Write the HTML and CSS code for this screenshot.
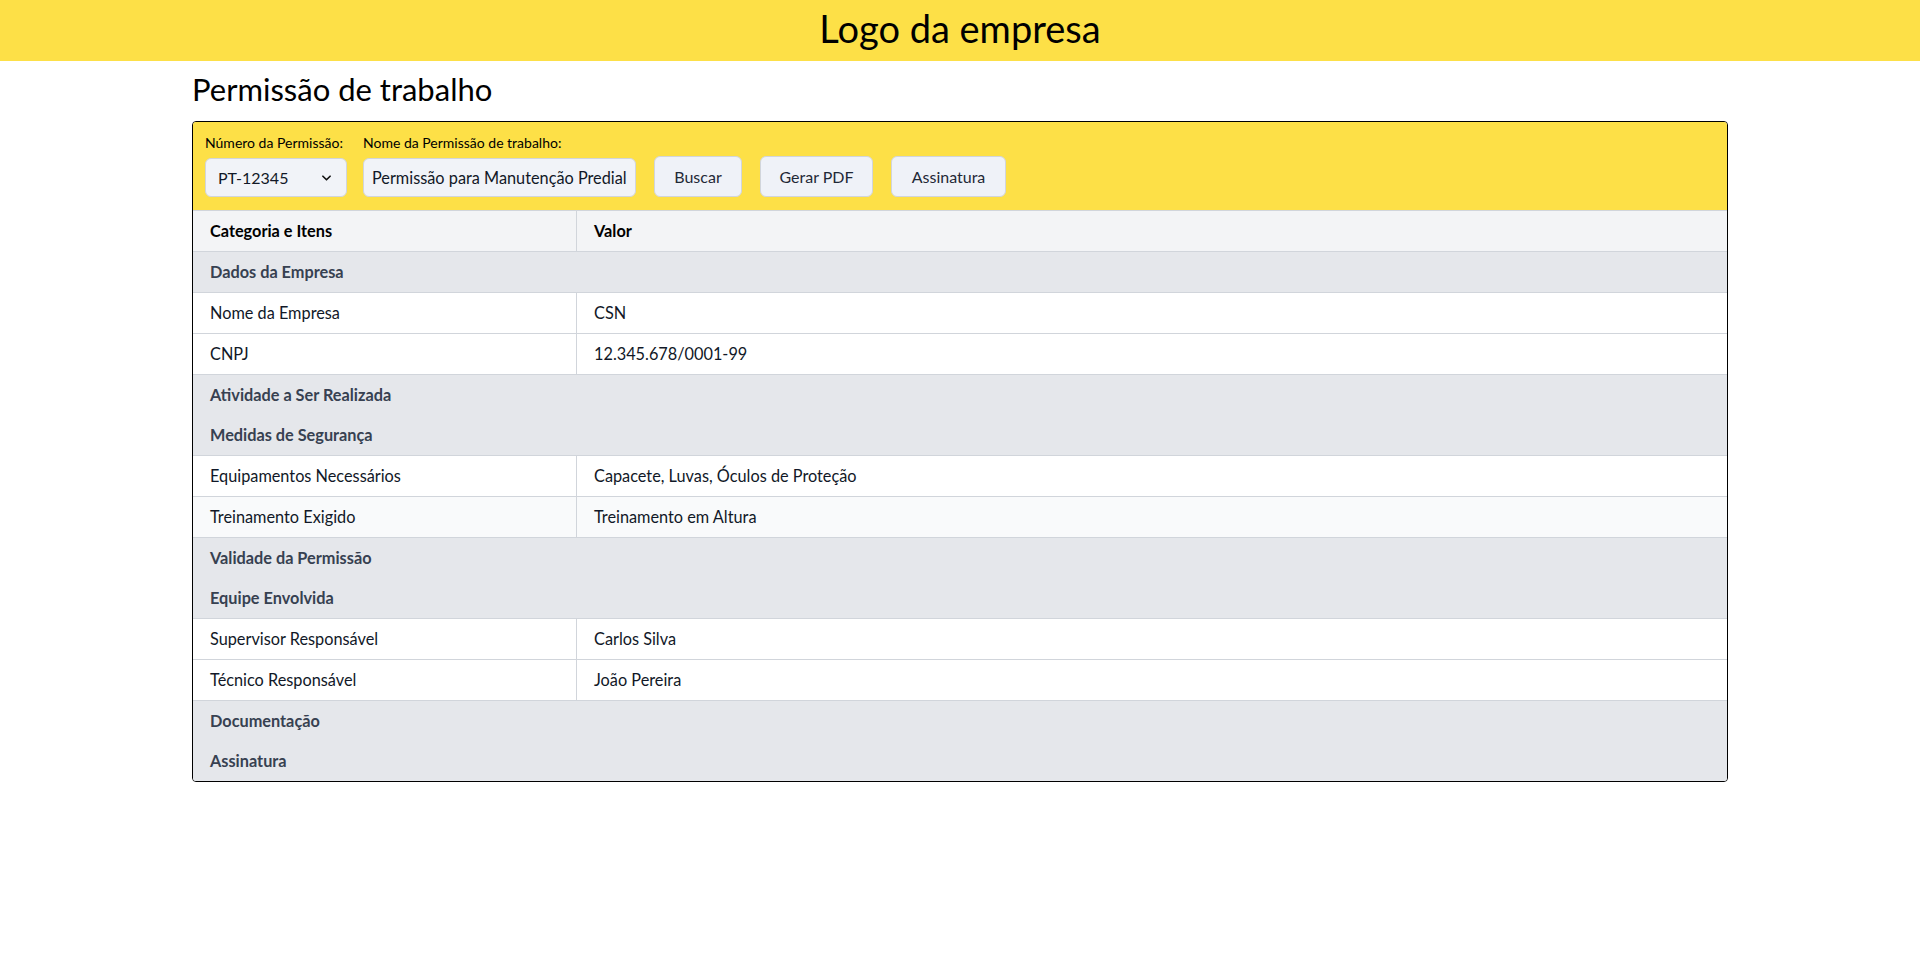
FILE: index.html
```html
<!DOCTYPE html>
<html lang="pt-BR">
<head>
<meta charset="utf-8">
<title>Permissão de trabalho</title>
<link rel="stylesheet" href="styles.css">
</head>
<body>
<header class="topbar">
  <h1 class="logo">Logo da empresa</h1>
</header>
<main class="container">
  <h2 class="page-title">Permissão de trabalho</h2>
  <section class="card">
    <div class="toolbar">
      <div class="field">
        <label class="field-label" for="num">Número da Permissão:</label>
        <div class="select-wrap">
          <select id="num" class="select"><option>PT-12345</option></select>
          <svg class="chev" viewBox="0 0 10 6" width="9" height="6"><path d="M1 1l4 4 4-4" fill="none" stroke="#111" stroke-width="1.8" stroke-linecap="round" stroke-linejoin="round"/></svg>
        </div>
      </div>
      <div class="field">
        <label class="field-label" for="nome">Nome da Permissão de trabalho:</label>
        <input id="nome" class="input" type="text" value="Permissão para Manutenção Predial">
      </div>
      <button class="btn btn-buscar">Buscar</button>
      <button class="btn btn-pdf">Gerar PDF</button>
      <button class="btn btn-ass">Assinatura</button>
    </div>
    <table class="grid">
      <thead>
        <tr><th class="col-cat">Categoria e Itens</th><th>Valor</th></tr>
      </thead>
      <tbody>
        <tr class="cat"><td colspan="2">Dados da Empresa</td></tr>
        <tr class="item"><td>Nome da Empresa</td><td>CSN</td></tr>
        <tr class="item"><td>CNPJ</td><td>12.345.678/0001-99</td></tr>
        <tr class="cat"><td colspan="2">Atividade a Ser Realizada</td></tr>
        <tr class="cat"><td colspan="2">Medidas de Segurança</td></tr>
        <tr class="item"><td>Equipamentos Necessários</td><td>Capacete, Luvas, Óculos de Proteção</td></tr>
        <tr class="item hover"><td>Treinamento Exigido</td><td>Treinamento em Altura</td></tr>
        <tr class="cat"><td colspan="2">Validade da Permissão</td></tr>
        <tr class="cat"><td colspan="2">Equipe Envolvida</td></tr>
        <tr class="item"><td>Supervisor Responsável</td><td>Carlos Silva</td></tr>
        <tr class="item"><td>Técnico Responsável</td><td>João Pereira</td></tr>
        <tr class="cat"><td colspan="2">Documentação</td></tr>
        <tr class="cat"><td colspan="2">Assinatura</td></tr>
      </tbody>
    </table>
  </section>
</main>
</body>
</html>
```
FILE: styles.css
```css
* { box-sizing: border-box; }
html, body { margin: 0; padding: 0; background: #fff; }
body {
  font-family: "Lato", "Noto Sans", sans-serif;
  color: #111827;
}
.topbar {
  background: #fde047;
  height: 61px;
  display: flex;
  align-items: flex-start;
  justify-content: center;
}
.logo {
  margin: 0;
  padding-top: 6px;
  font-weight: 400;
  font-size: 38px;
  line-height: 44px;
  color: #000;
}
.container {
  width: 1536px;
  margin: 0 auto;
}
.page-title {
  margin: 0;
  padding-top: 8px;
  font-weight: 400;
  font-size: 31px;
  line-height: 40px;
  color: #000;
  height: 60px;
}
.card {
  border: 1px solid #000;
  border-radius: 4px;
  overflow: hidden;
}
.toolbar {
  background: #fde047;
  padding: 12px 12px 13px 12px;
  display: flex;
  align-items: flex-end;
  gap: 16px;
}
.field { display: flex; flex-direction: column; }
.field-label {
  font-size: 14px;
  line-height: 18px;
  margin-bottom: 6px;
  color: #000;
}
.select-wrap { position: relative; width: 142px; }
.select {
  appearance: none;
  -webkit-appearance: none;
  width: 142px;
  height: 39px;
  border: 1px solid #d1d5db;
  border-radius: 6px;
  background: #f1f3f8;
  font-family: inherit;
  font-size: 16px;
  color: #111827;
  padding: 0 12px;
}
.chev { position: absolute; right: 16px; top: 17px; pointer-events: none; }
.input {
  width: 273px;
  height: 39px;
  border: 1px solid #d1d5db;
  border-radius: 6px;
  background: #f1f3f8;
  font-family: inherit;
  font-size: 16.3px;
  color: #111827;
  padding: 0 8px;
}
.btn {
  height: 41px;
  border: 1px solid #d1d5db;
  border-radius: 6px;
  background: #eff2f8;
  font-family: inherit;
  font-size: 16px;
  color: #1f2937;
  padding: 0;
  margin-left: 2px;
}
.btn-buscar { width: 88px; }
.btn-pdf { width: 113px; }
.btn-ass { width: 115px; }
.grid {
  width: 100%;
  border-collapse: collapse;
  font-size: 16.3px;
}
.grid th, .grid td {
  text-align: left;
  padding: 8px 17px;
  line-height: 24px;
}
.grid thead th {
  background: #f3f4f6;
  font-weight: 700;
  color: #000;
  border-top: 1px solid #d1d5db;
  border-bottom: 1px solid #d1d5db;
}
.grid .col-cat { width: 25%; }
.grid thead th + th, .item td + td { border-left: 1px solid #d1d5db; }
.cat td {
  background: #e5e7eb;
  font-weight: 700;
  color: #374151;
}
.item td {
  background: #fff;
  color: #111827;
  border-top: 1px solid #d1d5db;
  border-bottom: 1px solid #d1d5db;
}
.item.hover td { background: #f9fafb; }
```
